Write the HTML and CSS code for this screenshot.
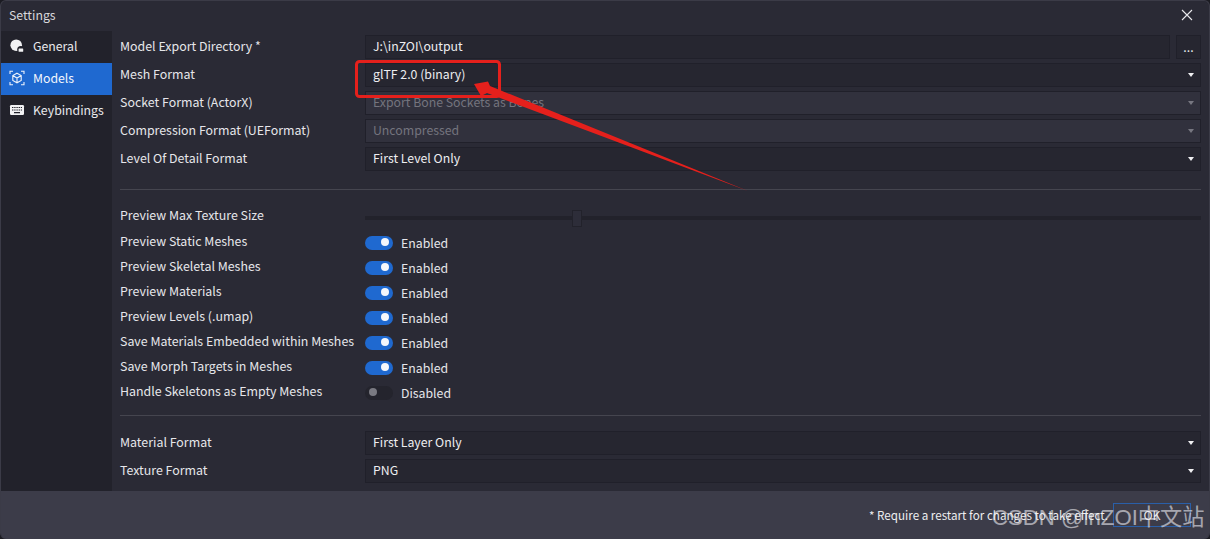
FILE: index.html
```html
<!DOCTYPE html>
<html lang="en">
<head>
<meta charset="utf-8">
<title>Settings</title>
<link rel="stylesheet" href="styles.css">
</head>
<body>
<div class="window">
  <header class="titlebar">
    <span class="title">Settings</span>
    <svg class="close" width="12" height="12" viewBox="0 0 12 12"><path d="M1 1L11 11M11 1L1 11" stroke="#e8e8ec" stroke-width="1.100" fill="none"/></svg>
  </header>
  <div class="body">
    <nav class="sidebar">
      <div class="tab">
        <svg class="tab-icon" width="16" height="16" viewBox="0 0 16 16"><circle cx="7.200" cy="7.200" r="5.800" fill="#f2f2f4"/><circle cx="11.800" cy="11.600" r="3.600" fill="#22222b"/><rect x="9.600" y="10.400" width="4.600" height="3.400" rx=".6" fill="#f2f2f4"/></svg>
        <span>General</span>
      </div>
      <div class="tab active">
        <svg class="tab-icon" width="16" height="16" viewBox="0 0 16 16" fill="none" stroke="#eef3fb" stroke-width="1.100"><path d="M1 4V1.200H4M12 1.200H15V4M15 12V14.800H12M4 14.800H1V12"/><path d="M8 3.200L12.200 5.600V10.400L8 12.800L3.800 10.400V5.600ZM3.800 5.600L8 8L12.200 5.600M8 8V12.800"/></svg>
        <span>Models</span>
      </div>
      <div class="tab">
        <svg class="tab-icon" width="16" height="16" viewBox="0 0 16 16"><rect x="1" y="3" width="14" height="10" rx="1.200" fill="#f2f2f4"/><path d="M3 5.500H13M3 8H13" stroke="#22222b" stroke-width="1.200" stroke-dasharray="1.400 .8"/><path d="M5 10.600H11" stroke="#22222b" stroke-width="1.200"/></svg>
        <span>Keybindings</span>
      </div>
    </nav>
    <main class="content">
      <section class="group">
        <div class="row">
          <label class="label">Model Export Directory *</label>
          <div class="path-field">
            <div class="control">J:\inZOI\output</div>
            <button class="browse">...</button>
          </div>
        </div>
        <div class="row"><label class="label">Mesh Format</label><div class="control select">glTF 2.0 (binary)</div></div>
        <div class="row"><label class="label">Socket Format (ActorX)</label><div class="control select disabled">Export Bone Sockets as Bones</div></div>
        <div class="row"><label class="label">Compression Format (UEFormat)</label><div class="control select disabled">Uncompressed</div></div>
        <div class="row"><label class="label">Level Of Detail Format</label><div class="control select">First Level Only</div></div>
      </section>
      <hr class="divider">
      <section class="group toggles">
        <div class="row slider-row"><label class="label">Preview Max Texture Size</label><div class="slider"><span class="thumb"></span></div></div>
        <div class="row tight"><label class="label">Preview Static Meshes</label><div class="toggle on"><span class="knob"></span><span class="state">Enabled</span></div></div>
        <div class="row tight"><label class="label">Preview Skeletal Meshes</label><div class="toggle on"><span class="knob"></span><span class="state">Enabled</span></div></div>
        <div class="row tight"><label class="label">Preview Materials</label><div class="toggle on"><span class="knob"></span><span class="state">Enabled</span></div></div>
        <div class="row tight"><label class="label">Preview Levels (.umap)</label><div class="toggle on"><span class="knob"></span><span class="state">Enabled</span></div></div>
        <div class="row tight"><label class="label">Save Materials Embedded within Meshes</label><div class="toggle on"><span class="knob"></span><span class="state">Enabled</span></div></div>
        <div class="row tight"><label class="label">Save Morph Targets in Meshes</label><div class="toggle on"><span class="knob"></span><span class="state">Enabled</span></div></div>
        <div class="row tight"><label class="label">Handle Skeletons as Empty Meshes</label><div class="toggle"><span class="knob"></span><span class="state">Disabled</span></div></div>
      </section>
      <hr class="divider divider-tight">
      <section class="group">
        <div class="row"><label class="label">Material Format</label><div class="control select">First Layer Only</div></div>
        <div class="row"><label class="label">Texture Format</label><div class="control select">PNG</div></div>
      </section>
    </main>
  </div>
  <footer class="footer">
    <span class="note">* Require a restart for changes to take effect.</span>
    <button class="ok">OK</button>
  </footer>
</div>
<svg class="annotation" width="1210" height="539" viewBox="0 0 1210 539">
  <rect x="356.500" y="61.500" width="143" height="35" rx="3" fill="none" stroke="#e5201c" stroke-width="3"/>
  <path d="M474 84L488 81.500L490 86L748 191L487 93L481 96Z" fill="#e5201c"/>
</svg>
<div class="watermark">CSDN @inZOI中文站</div>
</body>
</html>
```
FILE: styles.css
```css
* { box-sizing: border-box; }
html, body { margin: 0; height: 100%; }
body {
  background: #1b1b22;
  overflow: hidden;
  font-family: "Noto Sans CJK SC", "Noto Sans", sans-serif;
  font-size: 12.300px;
  color: #e9e9ec;
}
.window {
  position: relative;
  width: 1210px;
  height: 539px;
  display: flex;
  flex-direction: column;
  background: #2a2a35;
  border: 1px solid #3b3b47;
  border-bottom: 0;
  border-radius: 6px;
  overflow: hidden;
}
.titlebar {
  height: 30px;
  flex: none;
  display: flex;
  align-items: center;
  justify-content: space-between;
  padding: 0 16px 2px 8px;
  color: #d8d8dc;
}
.body { flex: 1; display: flex; min-height: 0; }
.sidebar {
  width: 111px;
  flex: none;
  background: #22222b;
  display: flex;
  flex-direction: column;
}
.tab {
  height: 32px;
  display: flex;
  align-items: center;
  gap: 8px;
  padding: 0 0 2px 8px;
}
.tab.active { background: #1f69d0; color: #f2f6fc; }
.tab-icon { flex: none; }
.content {
  flex: 1;
  padding: 4px 8px 0 8px;
  display: flex;
  flex-direction: column;
  min-width: 0;
}
.group { display: flex; flex-direction: column; gap: 4px; }
.row {
  display: grid;
  grid-template-columns: 245px 1fr;
  align-items: center;
  height: 24px;
}
.label { font-size: 12.400px; line-height: 18px; position: relative; top: -1px; color: #e6e6ea; white-space: nowrap; }
.path-field { display: flex; gap: 6px; }
.path-field .control { flex: 1; }
.control {
  height: 24px;
  line-height: 20px;
  background: #262630;
  border: 1px solid #20202a;
  padding: 0 7px;
  color: #eeeef0;
  position: relative;
}
.select::after {
  content: "";
  position: absolute;
  right: 6px;
  top: 9px;
  border: 3.500px solid transparent;
  border-top: 4px solid #f0f0f2;
  border-bottom: 0;
}
.disabled { background: #31313d; color: #74747e; }
.disabled::after { border-top-color: #777781; }
.browse {
  width: 25px;
  height: 24px;
  background: #262630;
  border: 1px solid #20202a;
  color: #e8e8ec;
  font: inherit;
  padding: 0;
}
.divider { width: 100%; height: 1px; margin: 18px 0 14px; background: #45454f; border: 0; flex: none; }
.divider-tight { margin: 11px 0 15px; }
.toggles { gap: 0; }
.slider-row { height: 24px; margin-bottom: 1px; }
.slider { height: 4px; background: #22222b; position: relative; margin-top: 3px; }
.thumb {
  position: absolute;
  left: 207px;
  top: -6px;
  width: 10px;
  height: 17px;
  background: #2d2d39;
  border: 1px solid #22222b;
}
.tight { height: 25px; }
.toggle { display: flex; align-items: center; position: relative; height: 15px; margin-top: 2px; }
.toggle::before {
  content: "";
  width: 28px;
  height: 14px;
  border-radius: 7px;
  background: #1f69d0;
  flex: none;
}
.knob {
  position: absolute;
  left: 16px;
  top: 3px;
  width: 8px;
  height: 8px;
  border-radius: 50%;
  background: #f5f7fb;
}
.state { margin-left: 8px; color: #e6e6ea; }
.toggle:not(.on)::before { background: #24242d; }
.toggle:not(.on) .knob { left: 4px; background: #7a7a82; }
.footer {
  height: 48px;
  flex: none;
  background: #3c3c49;
  display: flex;
  align-items: center;
  justify-content: flex-end;
  gap: 5px;
  padding: 0 18px 0 0;
}
.note { color: #eeeef0; font-size: 11.650px; margin-bottom: 2px; }
.ok {
  width: 78px;
  height: 24px;
  background: #3c3c49;
  border: 1px solid #2a5fa8;
  color: #e9e9ec;
  font: inherit;
  padding: 0;
}
.annotation { position: absolute; left: 0; top: 0; pointer-events: none; }
.watermark {
  position: absolute;
  left: 992px;
  top: 504px;
  font-size: 22.200px;
  line-height: 28px;
  white-space: nowrap;
  color: rgba(240, 240, 245, 0.6);
  font-family: "Liberation Sans", "Noto Sans CJK SC", sans-serif;
}
```
